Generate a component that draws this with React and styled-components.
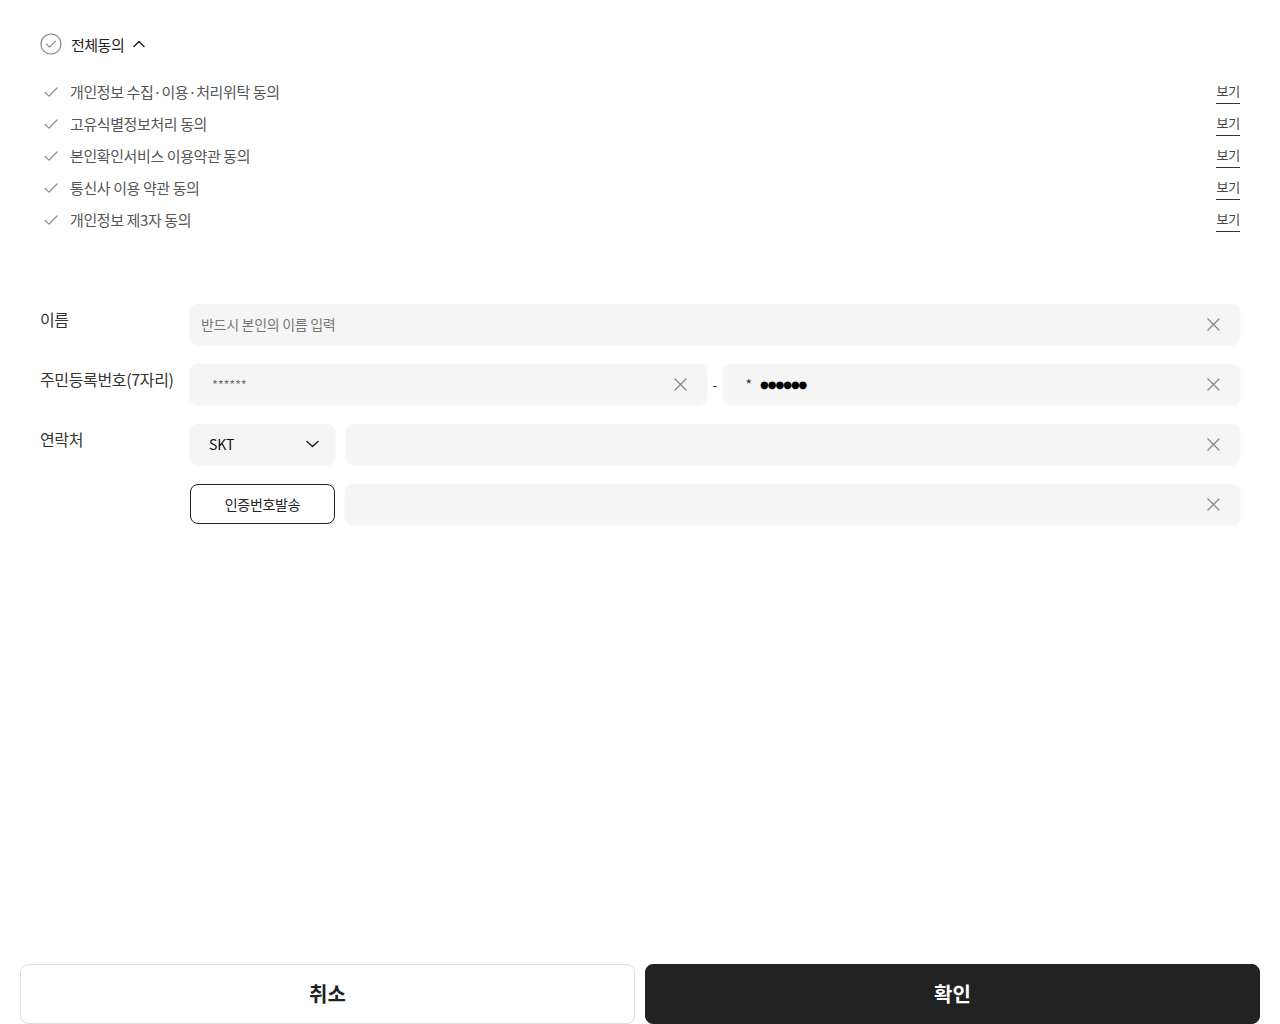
import React from 'react';
import styled, { createGlobalStyle } from 'styled-components';

const GlobalStyle = createGlobalStyle`
  html, body { margin: 0; padding: 0; background: #fff; }
  body { font-family: "Noto Sans CJK KR", "Noto Sans", sans-serif; color: #222; }
  * { box-sizing: border-box; }
`;

const Page = styled.div`
  min-height: 100vh;
  display: flex;
  flex-direction: column;
`;

const Content = styled.div`
  padding: 30px 40px 0;
`;

const AllAgree = styled.div`
  display: flex;
  align-items: center;
  gap: 9px;
  height: 28px;
  font-size: 15px;
  letter-spacing: -0.5px;
  color: #222;
`;

const AgreeList = styled.ul`
  list-style: none;
  margin: 17px 0 0;
  padding: 0;
`;

const AgreeRow = styled.li`
  display: flex;
  align-items: center;
  height: 32px;
  font-size: 15px;
  letter-spacing: -0.4px;
  color: #555;
`;

const CheckBox = styled.span`
  width: 30px;
  display: flex;
  align-items: center;
  padding: 2px 0 0 4px;
`;

const AgreeText = styled.span`
  flex: 1;
`;

const ViewLink = styled.a`
  font-size: 13px;
  letter-spacing: -0.2px;
  color: #444;
  text-decoration: none;
  border-bottom: 1px solid #333;
  line-height: 20px;
  padding-bottom: 2px;
  margin-top: 2px;
`;

const Form = styled.div`
  margin-top: 69px;
  display: flex;
  flex-direction: column;
  gap: 20px;
`;

const FormRow = styled.div`
  display: flex;
`;

const Label = styled.div`
  width: 150px;
  flex-shrink: 0;
  font-size: 16px;
  letter-spacing: -0.35px;
  color: #333;
  line-height: 30px;
`;

const Fields = styled.div`
  flex: 1;
  display: flex;
  align-items: center;
  gap: ${({ gap }) => gap || 10}px;
`;

const InputBox = styled.div`
  flex: 1;
  height: 40px;
  border-radius: 8px;
  background: #f5f5f5;
  box-shadow: 0 1px 3px rgba(0, 0, 0, 0.06);
  display: flex;
  align-items: center;
  padding: 0 20px 0 ${({ pl }) => pl || 11}px;
`;

const Input = styled.input`
  flex: 1;
  min-width: 0;
  border: none;
  outline: none;
  background: transparent;
  font-family: inherit;
  font-size: ${({ size }) => size || 14}px;
  letter-spacing: -0.3px;
  color: #111;
  padding: 0;
  &::placeholder { color: #777; }
`;

const Prefix = styled.span`
  font-size: 14px;
  color: #333;
  margin-right: 8px;
`;

const Dots = styled.span`
  flex: 1;
  font-size: 10px;
  letter-spacing: -1px;
  color: #000;
  font-family: "DejaVu Sans", sans-serif;
`;

const Dash = styled.span`
  font-size: 14px;
  color: #333;
`;

const Select = styled.div`
  flex: 0 0 145px;
  height: 40px;
  border-radius: 8px;
  background: #f5f5f5;
  box-shadow: 0 1px 3px rgba(0, 0, 0, 0.06);
  display: flex;
  align-items: center;
  justify-content: space-between;
  padding: 0 16px 0 19px;
  font-size: 14px;
  color: #111;
`;

const OutlineButton = styled.button`
  flex: 0 0 145px;
  height: 40px;
  border-radius: 8px;
  border: 1px solid #222;
  background: #fff;
  font-family: inherit;
  font-size: 14px;
  letter-spacing: -0.3px;
  color: #222;
  cursor: pointer;
`;

const Footer = styled.div`
  margin-top: auto;
  display: flex;
  gap: 10px;
  padding: 0 20px;
`;

const FooterButton = styled.button`
  flex: 1;
  height: 60px;
  border-radius: 8px;
  font-family: inherit;
  font-size: 20px;
  font-weight: 700;
  padding-bottom: 2px;
  cursor: pointer;
  border: 1px solid ${({ primary }) => (primary ? '#222' : '#ddd')};
  background: ${({ primary }) => (primary ? '#222' : '#fff')};
  color: ${({ primary }) => (primary ? '#fff' : '#222')};
`;

const CircleCheck = () => (
  <svg width="22" height="22" viewBox="0 0 22 22" fill="none">
    <circle cx="11" cy="11" r="10" stroke="#888" strokeWidth="1.2" />
    <path d="M6.5 11.2l3 3 6-6" stroke="#888" strokeWidth="1.2" strokeLinecap="round" strokeLinejoin="round" />
  </svg>
);

const Check = () => (
  <svg width="14" height="12" viewBox="0 0 14 12" fill="none">
    <path d="M1 6.5l4 3.6L13 2" stroke="#888" strokeWidth="1.2" strokeLinecap="round" strokeLinejoin="round" />
  </svg>
);

const ChevronUp = () => (
  <svg width="12" height="8" viewBox="0 0 12 8" fill="none">
    <path d="M1 6.5L6 1.5l5 5" stroke="#222" strokeWidth="1.5" strokeLinecap="round" strokeLinejoin="round" />
  </svg>
);

const ChevronDown = () => (
  <svg width="13" height="8" viewBox="0 0 13 8" fill="none">
    <path d="M1 1.5l5.5 5 5.5-5" stroke="#222" strokeWidth="1.5" strokeLinecap="round" strokeLinejoin="round" />
  </svg>
);

const Clear = () => (
  <svg width="13" height="13" viewBox="0 0 13 13" fill="none">
    <path d="M1 1l11 11M12 1L1 12" stroke="#888" strokeWidth="1.3" strokeLinecap="round" />
  </svg>
);

const agreements = [
  '개인정보 수집·이용·처리위탁 동의',
  '고유식별정보처리 동의',
  '본인확인서비스 이용약관 동의',
  '통신사 이용 약관 동의',
  '개인정보 제3자 동의',
];

export default function App() {
  return (
    <Page>
      <GlobalStyle />
      <Content>
        <AllAgree>
          <CircleCheck />
          <span>전체동의</span>
          <ChevronUp />
        </AllAgree>
        <AgreeList>
          {agreements.map((a) => (
            <AgreeRow key={a}>
              <CheckBox><Check /></CheckBox>
              <AgreeText>{a}</AgreeText>
              <ViewLink href="#">보기</ViewLink>
            </AgreeRow>
          ))}
        </AgreeList>

        <Form>
          <FormRow>
            <Label>이름</Label>
            <Fields>
              <InputBox>
                <Input placeholder="반드시 본인의 이름 입력" />
                <Clear />
              </InputBox>
            </Fields>
          </FormRow>
          <FormRow>
            <Label>주민등록번호(7자리)</Label>
            <Fields gap={6}>
              <InputBox pl={22}>
                <Input placeholder="******" size={13} />
                <Clear />
              </InputBox>
              <Dash>-</Dash>
              <InputBox pl={22}>
                <Prefix>*</Prefix>
                <Dots>●●●●●●</Dots>
                <Clear />
              </InputBox>
            </Fields>
          </FormRow>
          <FormRow>
            <Label>연락처</Label>
            <Fields gap={11}>
              <Select>
                <span>SKT</span>
                <ChevronDown />
              </Select>
              <InputBox>
                <Input />
                <Clear />
              </InputBox>
            </Fields>
          </FormRow>
          <FormRow>
            <Label />
            <Fields>
              <OutlineButton>인증번호발송</OutlineButton>
              <InputBox>
                <Input />
                <Clear />
              </InputBox>
            </Fields>
          </FormRow>
        </Form>
      </Content>
      <Footer>
        <FooterButton>취소</FooterButton>
        <FooterButton primary>확인</FooterButton>
      </Footer>
    </Page>
  );
}
